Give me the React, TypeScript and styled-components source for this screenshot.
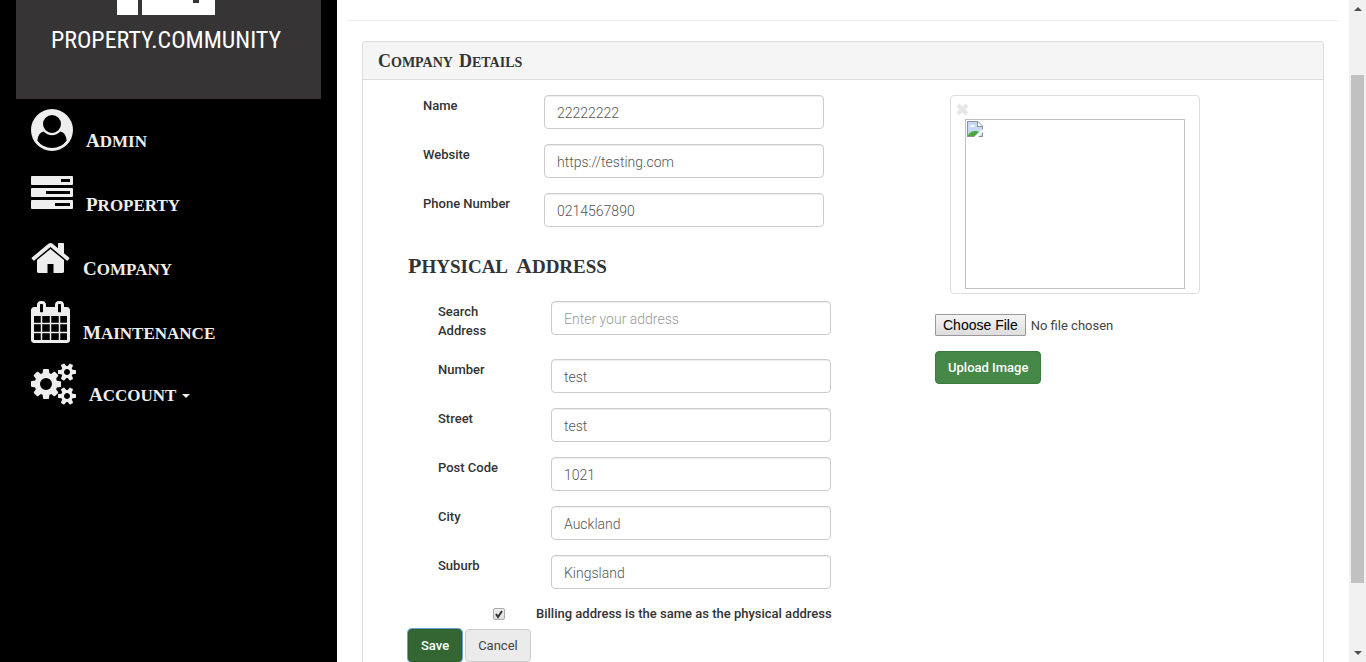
import React, { useState } from "react";
import styled, { createGlobalStyle } from "styled-components";

const GlobalStyle = createGlobalStyle`
  *, *::before, *::after { box-sizing: border-box; }
  body {
    margin: 0;
    background: #fff;
    color: #333;
    font: 400 14px/19px Roboto, "Open Sans", sans-serif;
  }
`;

const displayFont = `"Liberation Serif", "Times New Roman", serif`;

const Shell = styled.div`
  display: flex;
  height: 100vh;
  overflow: hidden;
`;

/* One word of display type: tall small caps after a modest initial */
const Word = styled.span<{ $initial: number }>`
  display: inline-block;
  font-variant: small-caps;

  &::first-letter {
    font-size: ${(p) => p.$initial}px;
    line-height: 1;
  }
`;

/* Sidebar */

const Sidebar = styled.aside`
  flex: 0 0 25%;
  max-width: 337px;
  padding: 0 16px;
  background: #000;
`;

const Logo = styled.a`
  display: flex;
  flex-direction: column;
  align-items: center;
  height: 99px;
  padding-right: 5px;
  background: #373435;
  color: #fff;
  text-decoration: none;
`;

const LogoText = styled.span`
  margin-top: 10px;
  font: 400 24px/30px "Roboto Condensed", Roboto, sans-serif;
  white-space: nowrap;
`;

const NavLink = styled.a<{ $tight?: boolean }>`
  display: flex;
  align-items: flex-end;
  gap: 13px;
  padding: ${(p) => (p.$tight ? "8px" : "10px")} 15px 12px;
  color: #eee;
  font: 700 24px/24px ${displayFont};
  text-decoration: none;

  svg {
    display: block;
    height: 42px;
    fill: currentColor;
  }
`;

const NavLabel = styled.span`
  display: flex;
  align-items: center;
  gap: 6px;
`;

const Caret = styled.i`
  margin-top: 6px;
  border: 4px solid transparent;
  border-top-color: currentColor;
  border-bottom: 0;
`;

/* Main area */

const Main = styled.main`
  display: flex;
  flex: 1;
  flex-direction: column;
  min-width: 0;
  padding: 0 10px;
`;

const Rule = styled.hr`
  width: 100%;
  margin: 20px 0;
  border: 0;
  border-top: 1px solid #eee;
`;

const Panel = styled.section`
  display: flex;
  flex: 1;
  flex-direction: column;
  margin: 0 15px;
  border: 1px solid #ddd;
  border-bottom: 0;
  border-radius: 4px 4px 0 0;
`;

const PanelTitle = styled.h3`
  display: flex;
  gap: 6px;
  margin: 0;
  padding: 7px 15px 8px;
  border-bottom: 1px solid #ddd;
  border-radius: 3px 3px 0 0;
  background: #f5f5f5;
  color: #333;
  font: 700 20px/22px ${displayFont};
`;

const PanelBody = styled.div`
  display: grid;
  grid-template-columns: 7fr 5fr;
  padding-top: 15px;
`;

const Form = styled.form`
  padding-left: 45px;
`;

const SectionTitle = styled.h2`
  display: flex;
  gap: 8px;
  margin: 22px 0;
  font: 700 27px/30px ${displayFont};
`;

const Fields = styled.div<{ $indent: number; $label: number }>`
  display: flex;
  flex-direction: column;
  gap: 15px;
  padding-left: ${(p) => p.$indent}px;

  label {
    flex: 0 0 ${(p) => p.$label}px;
  }
`;

const Row = styled.div`
  display: flex;
  align-items: flex-start;
`;

const Label = styled.label`
  padding: 1px 30px 4px 0;
  font-size: 13px;
  font-weight: 500;
`;

const TextInput = styled.input`
  flex: 0 1 280px;
  min-width: 0;
  height: 34px;
  padding: 7px 12px 5px;
  border: 1px solid #ccc;
  border-radius: 4px;
  background: #fff;
  box-shadow: inset 0 1px 1px rgba(0, 0, 0, 0.075);
  color: #555;
  font: 300 14px/20px Roboto, "Open Sans", sans-serif;

  &::placeholder {
    color: #999;
  }
`;

const CheckRow = styled.div`
  display: flex;
  align-items: center;
  gap: 31px;
  padding: 15px 0 5px 85px;
`;

const CheckWrap = styled.span`
  display: grid;

  > * {
    grid-area: 1 / 1;
  }

  svg {
    pointer-events: none;
  }
`;

const CheckBox = styled.input`
  appearance: none;
  width: 12px;
  height: 12px;
  margin: 0;
  border: 1px solid #aaa;
  border-radius: 2px;
  background: linear-gradient(#eee, #ddd);
`;

const CheckLabel = styled.label`
  font-size: 13px;
  font-weight: 500;
  line-height: 20px;
  white-space: nowrap;
`;

const Actions = styled.div`
  display: flex;
  gap: 3px;
`;

const Button = styled.button<{ $tone: "save" | "upload" | "plain" }>`
  height: 33px;
  padding: 1px 12px 0;
  border: 1px solid
    ${(p) => ({ save: "#2d5f2d", upload: "#3d7a3d", plain: "#ccc" })[p.$tone]};
  border-radius: 4px;
  background: ${(p) => ({ save: "#336633", upload: "#468847", plain: "#ebebeb" })[p.$tone]};
  box-shadow: ${(p) => (p.$tone === "save" ? "0 0 0 1px #6a9fd8" : "none")};
  color: ${(p) => (p.$tone === "plain" ? "#444" : "#fff")};
  font: ${(p) => (p.$tone === "plain" ? 400 : 500)} 13px/20px Roboto, "Open Sans", sans-serif;
  white-space: nowrap;
`;

/* Company image */

const ImageColumn = styled.div`
  display: flex;
  flex-direction: column;
  align-items: flex-start;
  padding-left: 12px;
`;

const Thumbnail = styled.div`
  width: 250px;
  max-width: 100%;
  margin: 0 0 20px 15px;
  padding: 0 14px 4px;
  border: 1px solid #ddd;
  border-radius: 4px;
`;

const RemoveButton = styled.button`
  display: flex;
  align-items: center;
  height: 23px;
  margin-left: -9px;
  padding: 2px 0 0;
  border: 0;
  background: none;
`;

const ImageFrame = styled.div`
  height: 170px;
  padding: 1px;
  border: 1px solid #c0c0c0;

  svg {
    display: block;
  }
`;

const FileInput = styled.input`
  max-width: 100%;
  height: 22px;
  margin-bottom: 15px;
  color: #444;
  font: 400 13px/22px Roboto, "Open Sans", sans-serif;

  &::file-selector-button {
    height: 22px;
    margin: 0 5px 0 0;
    padding: 0 7px;
    border: 1px solid #999;
    border-radius: 1px;
    background: linear-gradient(#f4f4f4, #ddd);
    color: #000;
    font: 400 14px/20px "Liberation Sans", Arial, sans-serif;
  }
`;

/* Scroll bar */

const ScrollBar = styled.div`
  display: flex;
  flex: 0 0 17px;
  flex-direction: column;
  align-items: center;
  background: #f1f1f1;
`;

const ScrollArrow = styled.svg`
  flex: 0 0 17px;
  width: 17px;
  fill: #505050;
`;

const ScrollPart = styled.div<{ $size: number; $thumb?: boolean }>`
  flex: ${(p) => p.$size} 0 0;
  width: 13px;
  background: ${(p) => (p.$thumb ? "#c1c1c1" : "transparent")};
`;

const smallGear =
  "v140q0 16-149 31-12 27-30 52 51 113 51 138 0 4-4 7-122 71-124 71-8 0-46-47t-52-68q-20 2-30 2t-30-2q-14 21-52 68t-46 47q-2 0-124-71-4-3-4-7 0-25 51-138-18-25-30-52-149-15-149-31v-140q0-16 149-31 13-29 30-52-51-113-51-138 0-4 4-7 4-2 35-20t59-34 30-16q8 0 46 46.5t52 67.5q20-2 30-2t30 2q51-71 92-112l6-2q4 0 124 70 4 3 4 7 0 25-51 138 17 23 30 52 149 15 149 31z";

const UserIcon = () => (
  <svg viewBox="0 0 1792 1792" width="42" aria-hidden="true">
    <path d="M1523 1339q-22-155-87.5-257.5t-184.5-118.5q-67 74-159.5 115.5t-195.5 41.5-195.5-41.5-159.5-115.5q-119 16-184.5 118.5t-87.5 257.5q106 150 271 237.5t356 87.5 356-87.5 271-237.5zm-243-699q0-159-112.5-271.5t-271.5-112.5-271.5 112.5-112.5 271.5 112.5 271.5 271.5 112.5 271.5-112.5 112.5-271.5zm512 256q0 182-71 347.5t-190.5 286-285.5 191.5-349 71q-182 0-348-71t-286-191-191-286-71-348 71-348 191-286 286-191 348-71 348 71 286 191 191 286 71 348z" />
  </svg>
);

const TasksIcon = () => (
  <svg viewBox="0 0 42 42" width="42" aria-hidden="true">
    <path
      fillRule="evenodd"
      d="M1 3h40q1 0 1 1v7q0 1-1 1H1q-1 0-1-1V4q0-1 1-1zM30 6v3h9V6zM1 15h40q1 0 1 1v7q0 1-1 1H1q-1 0-1-1v-7q0-1 1-1zM15 18v3h24v-3zM1 27h40q1 0 1 1v7q0 1-1 1H1q-1 0-1-1v-7q0-1 1-1zM24 30v3h15v-3z"
    />
  </svg>
);

const HomeIcon = () => (
  <svg viewBox="64 0 1664 1792" width="39" aria-hidden="true">
    <path d="M1472 992v480q0 26-19 45t-45 19h-384v-384h-256v384h-384q-26 0-45-19t-19-45v-480q0-1 .5-3t.5-3l575-474 575 474q1 2 1 6zm223-69l-62 74q-8 9-21 11h-3q-13 0-21-7l-692-577-692 577q-12 8-24 7-13-2-21-11l-62-74q-8-10-7-23.5t11-21.5l719-599q32-26 76-26t76 26l244 204v-195q0-14 9-23t23-9h192q14 0 23 9t9 23v408l219 182q10 8 11 21.5t-7 23.5z" />
  </svg>
);

const CalendarIcon = () => (
  <svg viewBox="64 0 1664 1792" width="39" aria-hidden="true">
    <path d="M192 1664h288v-288h-288v288zm352 0h320v-288h-320v288zm-352-352h288v-320h-288v320zm352 0h320v-320h-320v320zm-352-384h288v-288h-288v288zm736 736h320v-288h-320v288zm-384-736h320v-288h-320v288zm768 736h288v-288h-288v288zm-384-352h320v-320h-320v320zm-352-864v-288q0-13-9.5-22.5t-22.5-9.5h-64q-13 0-22.5 9.5t-9.5 22.5v288q0 13 9.5 22.5t22.5 9.5h64q13 0 22.5-9.5t9.5-22.5zm736 864h288v-320h-288v320zm-384-384h320v-288h-320v288zm384 0h288v-288h-288v288zm32-480v-288q0-13-9.5-22.5t-22.5-9.5h-64q-13 0-22.5 9.5t-9.5 22.5v288q0 13 9.5 22.5t22.5 9.5h64q13 0 22.5-9.5t9.5-22.5zm384-64v1280q0 52-38 90t-90 38h-1408q-52 0-90-38t-38-90v-1280q0-52 38-90t90-38h128v-96q0-66 47-113t113-47h64q66 0 113 47t47 113v96h384v-96q0-66 47-113t113-47h64q66 0 113 47t47 113v96h128q52 0 90 38t38 90z" />
  </svg>
);

const CogsIcon = () => (
  <svg viewBox="0 0 1920 1792" width="45" aria-hidden="true">
    <path
      d={
        "M896 896q0-106-75-181t-181-75-181 75-75 181 75 181 181 75 181-75 75-181zm768 512q0-52-38-90t-90-38-90 38-38 90q0 53 37.5 90.5t90.5 37.5 90.5-37.5 37.5-90.5zm0-1024q0-52-38-90t-90-38-90 38-38 90q0 53 37.5 90.5t90.5 37.5 90.5-37.5 37.5-90.5zm-384 421v185q0 10-7 19.5t-16 10.5l-155 24q-11 35-32 76 34 48 90 115 7 11 7 20 0 12-7 19-23 30-82.5 89.5t-78.5 59.5q-11 0-21-7l-115-90q-37 19-77 31-11 108-23 155-7 24-30 24h-186q-11 0-20-7.5t-10-17.5l-23-153q-34-10-75-31l-118 89q-7 7-20 7-11 0-21-8-144-133-144-160 0-9 7-19 10-14 41-53t47-61q-23-44-35-82l-152-24q-10-1-17-9.5t-7-19.5v-185q0-10 7-19.5t16-10.5l155-24q11-35 32-76-34-48-90-115-7-11-7-20 0-12 7-20 22-30 82-89t79-59q11 0 21 7l115 90q34-18 77-32 11-108 23-154 7-24 30-24h186q11 0 20 7.5t10 17.5l23 153q34 10 75 31l118-89q8-7 20-7 11 0 21 8 144 133 144 160 0 8-7 19-12 16-42 54t-45 60q23 48 34 82l152 23q10 2 17 10.5t7 19.5z" +
        "M1920 1338" + smallGear +
        "M1920 314" + smallGear
      }
    />
  </svg>
);

const BrokenImageIcon = () => (
  <svg viewBox="0 0 16 16" width="16" height="16" role="img" aria-label="Company image">
    <path d="M0 0h11l5 5v11H0z" fill="#8d9299" />
    <path d="M1 1h9v5h5v9H1z" fill="#c6d9f7" />
    <path d="M11 1l4 4h-4z" fill="#fff" />
    <path d="M3 6q0-2 2-2 2-1 3 2z" fill="#fff" />
    <path d="M1 15v-1q3-4 7-4 3 0 4 1l-4 4z" fill="#4ba83c" />
    <path d="M16 8v3l-5 5H7z" fill="#fff" />
  </svg>
);

const navItems = [
  { label: "Admin", icon: <UserIcon /> },
  { label: "Property", icon: <TasksIcon /> },
  { label: "Company", icon: <HomeIcon /> },
  { label: "Maintenance", icon: <CalendarIcon /> },
  { label: "Account", icon: <CogsIcon />, menu: true },
];

type FieldProps = { id: string; label: string; value?: string; placeholder?: string };

const Field = ({ id, label, value, placeholder }: FieldProps) => (
  <Row>
    <Label htmlFor={id}>{label}</Label>
    <TextInput id={id} type="text" defaultValue={value} placeholder={placeholder} />
  </Row>
);

export default function App() {
  const [sameAddress, setSameAddress] = useState(true);

  return (
    <>
      <GlobalStyle />
      <Shell>
        <Sidebar>
          <Logo href="#">
            <svg viewBox="0 0 98 15" width="98" height="15" fill="#fff" aria-hidden="true">
              <path d="M0 0h21v15H0zM25 0h51v3h6V0h16v15H25z" />
            </svg>
            <LogoText>PROPERTY.COMMUNITY</LogoText>
          </Logo>
          <nav>
            {navItems.map((item) => (
              <NavLink key={item.label} href="#" $tight={item.menu}>
                {item.icon}
                <NavLabel>
                  <Word $initial={19}>{item.label}</Word>
                  {item.menu && <Caret />}
                </NavLabel>
              </NavLink>
            ))}
          </nav>
        </Sidebar>

        <Main>
          <Rule />
          <Panel>
            <PanelTitle>
              <Word $initial={18}>Company</Word> <Word $initial={18}>Details</Word>
            </PanelTitle>
            <PanelBody>
              <Form onSubmit={(e) => e.preventDefault()}>
                <Fields $indent={15} $label={121}>
                  <Field id="name" label="Name" value="22222222" />
                  <Field id="website" label="Website" value="https://testing.com" />
                  <Field id="phone" label="Phone Number" value="0214567890" />
                </Fields>
                <SectionTitle>
                  <Word $initial={22}>Physical</Word> <Word $initial={22}>Address</Word>
                </SectionTitle>
                <Fields $indent={30} $label={113}>
                  <Field id="search" label="Search Address" placeholder="Enter your address" />
                  <Field id="number" label="Number" value="test" />
                  <Field id="street" label="Street" value="test" />
                  <Field id="postcode" label="Post Code" value="1021" />
                  <Field id="city" label="City" value="Auckland" />
                  <Field id="suburb" label="Suburb" value="Kingsland" />
                </Fields>
                <CheckRow>
                  <CheckWrap>
                    <CheckBox
                      id="same"
                      type="checkbox"
                      checked={sameAddress}
                      onChange={(e) => setSameAddress(e.target.checked)}
                    />
                    {sameAddress && (
                      <svg viewBox="0 0 12 12" width="12" height="12" aria-hidden="true">
                        <path d="M3 6l2 3 4-6" fill="none" stroke="#333" strokeWidth="2" />
                      </svg>
                    )}
                  </CheckWrap>
                  <CheckLabel htmlFor="same">
                    Billing address is the same as the physical address
                  </CheckLabel>
                </CheckRow>
                <Actions>
                  <Button type="submit" $tone="save">Save</Button>
                  <Button type="button" $tone="plain">Cancel</Button>
                </Actions>
              </Form>

              <ImageColumn>
                <Thumbnail>
                  <RemoveButton type="button" aria-label="Remove image">
                    <svg viewBox="0 0 14 14" width="14" height="14" aria-hidden="true">
                      <path d="M2 3l9 9M11 3l-9 9" stroke="#e6e6e6" strokeWidth="4" />
                    </svg>
                  </RemoveButton>
                  <ImageFrame>
                    <BrokenImageIcon />
                  </ImageFrame>
                </Thumbnail>
                <FileInput type="file" aria-label="Company image file" />
                <Button type="button" $tone="upload">Upload Image</Button>
              </ImageColumn>
            </PanelBody>
          </Panel>
        </Main>

        <ScrollBar aria-hidden="true">
          <ScrollArrow viewBox="0 0 17 17" height="17">
            <path d="M5 11l4-4 4 4z" />
          </ScrollArrow>
          <ScrollPart $size={58} />
          <ScrollPart $size={508} $thumb />
          <ScrollPart $size={62} />
          <ScrollArrow viewBox="0 0 17 17" height="17">
            <path d="M5 6l4 4 4-4z" />
          </ScrollArrow>
        </ScrollBar>
      </Shell>
    </>
  );
}
